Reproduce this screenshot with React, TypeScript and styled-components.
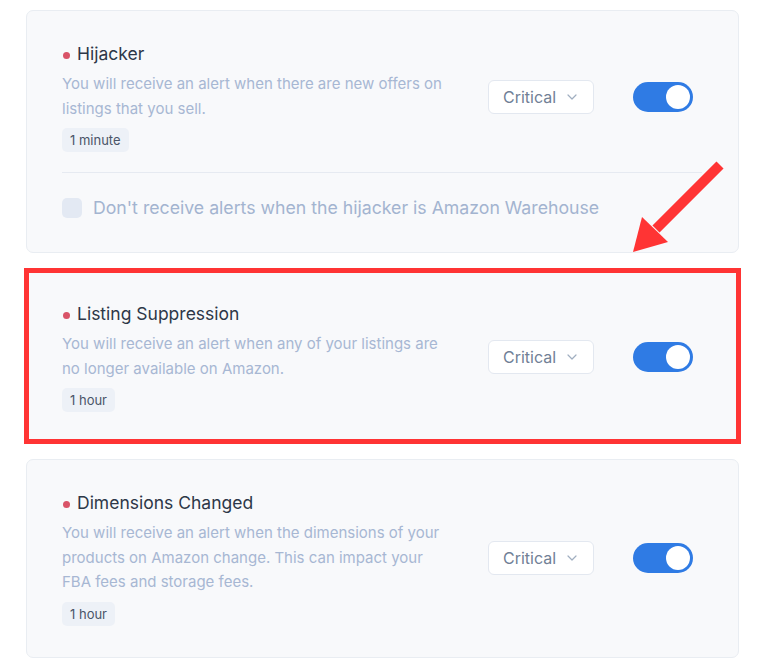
import React from 'react';
import styled, { createGlobalStyle } from 'styled-components';

const GlobalStyle = createGlobalStyle`
	body {
		margin: 0;
		background: #ffffff;
		font-family: 'Inter', 'Noto Sans', sans-serif;
	}
`;

const Page = styled.div`
	position: relative;
	width: 768px;
	height: 668px;
	box-sizing: border-box;
	padding: 10px 29px 0 26px;
	display: flex;
	flex-direction: column;
	gap: 17px;
	overflow: hidden;
`;

const Card = styled.div<{ $highlighted?: boolean }>`
	background: #f8f9fb;
	border: 1px solid #e9edf2;
	border-radius: 7px;
	padding: 31px 36px 31px 35px;
	${(p) =>
		p.$highlighted &&
		`
		border-radius: 0;
		padding-bottom: 29px;
		outline: 5px solid #ff3434;
		outline-offset: -3px;
	`}
`;

const HeaderRow = styled.div`
	display: flex;
	align-items: center;
`;

const Info = styled.div`
	flex: 1;
	display: flex;
	flex-direction: column;
	align-items: flex-start;
`;

const Title = styled.div`
	display: flex;
	align-items: center;
	font-size: 17.5px;
	line-height: 24px;
	color: #2d3748;
`;

const Dot = styled.span`
	width: 7px;
	height: 7px;
	border-radius: 50%;
	background: #d95468;
	margin: 3px 7px 0 1px;
`;

const Description = styled.p`
	margin: 6px 0 0;
	max-width: 390px;
	font-size: 15px;
	line-height: 24.5px;
	color: #a7b7d3;
`;

const Tag = styled.span`
	margin-top: 7px;
	height: 24px;
	padding: 0 8px;
	display: inline-flex;
	align-items: center;
	border-radius: 5px;
	background: #edf1f7;
	color: #4a5568;
	font-size: 13px;
`;

const Controls = styled.div`
	display: flex;
	align-items: center;
	gap: 39px;
	padding-right: 9px;
`;

const Select = styled.div`
	box-sizing: border-box;
	width: 106px;
	height: 34px;
	padding-left: 14px;
	display: flex;
	align-items: center;
	gap: 11px;
	background: #ffffff;
	border: 1px solid #e3e8f0;
	border-radius: 6px;
	color: #718096;
	font-size: 16px;
`;

const Toggle = styled.div<{ $on?: boolean }>`
	box-sizing: border-box;
	width: 60px;
	height: 30px;
	padding: 3px;
	border-radius: 15px;
	background: ${(p) => (p.$on ? '#2f7be4' : '#cbd5e0')};
	display: flex;
	justify-content: ${(p) => (p.$on ? 'flex-end' : 'flex-start')};

	&::after {
		content: '';
		width: 24px;
		height: 24px;
		border-radius: 50%;
		background: #ffffff;
	}
`;

const Divider = styled.hr`
	margin: 20px 0 0;
	border: none;
	border-top: 1px solid #e6eaf1;
`;

const CheckRow = styled.label`
	margin-top: 22px;
	display: flex;
	align-items: center;
	gap: 11px;
	font-size: 17.7px;
	line-height: 26px;
	color: #a3b4d0;
`;

const CheckBox = styled.span`
	width: 20px;
	height: 20px;
	border-radius: 5px;
	background: #e3e9f3;
`;

const Arrow = styled.svg`
	position: absolute;
	left: 600px;
	top: 150px;
`;

const Chevron = () => (
	<svg width="10" height="6" viewBox="0 0 10 6" fill="none">
		<path d="M1 1l4 4 4-4" stroke="#a0aec0" strokeWidth="1.2" strokeLinecap="round" strokeLinejoin="round" />
	</svg>
);

interface AlertProps {
	title: string;
	description: string;
	interval: string;
}

const AlertHeader = ({ title, description, interval }: AlertProps) => (
	<HeaderRow>
		<Info>
			<Title>
				<Dot />
				{title}
			</Title>
			<Description>{description}</Description>
			<Tag>{interval}</Tag>
		</Info>
		<Controls>
			<Select>
				Critical
				<Chevron />
			</Select>
			<Toggle $on />
		</Controls>
	</HeaderRow>
);

const App = () => {
	return (
		<Page>
			<GlobalStyle />
			<Card>
				<AlertHeader
					title="Hijacker"
					description="You will receive an alert when there are new offers on listings that you sell."
					interval="1 minute"
				/>
				<Divider />
				<CheckRow>
					<CheckBox />
					Don't receive alerts when the hijacker is Amazon Warehouse
				</CheckRow>
			</Card>
			<Card $highlighted>
				<AlertHeader
					title="Listing Suppression"
					description="You will receive an alert when any of your listings are no longer available on Amazon."
					interval="1 hour"
				/>
			</Card>
			<Card>
				<AlertHeader
					title="Dimensions Changed"
					description="You will receive an alert when the dimensions of your products on Amazon change. This can impact your FBA fees and storage fees."
					interval="1 hour"
				/>
			</Card>
			<Arrow width="150" height="130" viewBox="0 0 150 130">
				<line x1="120" y1="15" x2="56" y2="79" stroke="#ff3434" strokeWidth="10" />
				<polygon points="33,102 42,67 68,92" fill="#ff3434" />
			</Arrow>
		</Page>
	);
};

export default App;
